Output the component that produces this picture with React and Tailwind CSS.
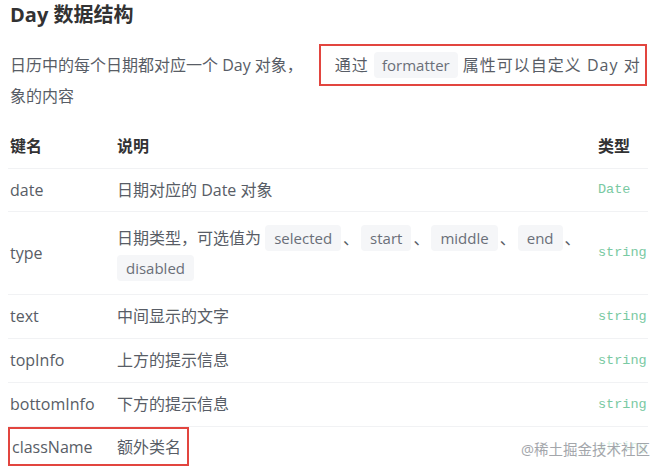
import React from 'react';

const sans = 'font-["Open_Sans","Noto_Sans_CJK_SC",sans-serif]';
const mono = 'font-["Liberation_Mono",monospace]';

const Code = ({ children, className = 'px-[8px]' }) => (
  <code className={`${sans} ${className} inline-block rounded-[4px] bg-[#f5f6f8] text-[15px] leading-[26px] tracking-normal text-[#6a6f78]`}>
    {children}
  </code>
);

const Sep = () => <span className="mx-[2px]">、</span>;

const rows = [
  { key: 'text', desc: '中间显示的文字', type: 'string' },
  { key: 'topInfo', desc: '上方的提示信息', type: 'string' },
  { key: 'bottomInfo', desc: '下方的提示信息', type: 'string' },
];

const App = () => {
  return (
    <div className={`${sans} relative h-[471px] w-[664px] overflow-hidden bg-white px-[10px] text-[#585d66]`}>
      <h3 className="text-[20px] font-bold leading-[30px] text-[#323233]">
        Day 数据结构
      </h3>

      <p className="mt-[20px] text-[16px] leading-[31px]">
        日历中的每个日期都对应一个 Day 对象，
        <span className="ml-[16px] border-2 border-[#e2453f] py-[8px] pl-[14px] pr-[4px] tracking-[1px]">
          通过 <Code>formatter</Code> <span className="tracking-[1px]">属性可以自定义 Day 对</span>
        </span>
        象的内容
      </p>

      <table className="mt-[12px] -ml-[2px] w-[640px] border-collapse text-[16px]">
        <thead>
          <tr className="border-b border-[#f1f2f4]">
            <th className="w-[107px] py-2.5 pl-[2px] text-left font-semibold leading-6 text-[#323233]">键名</th>
            <th className="py-2.5 pl-[2px] text-left font-semibold leading-6 text-[#323233]">说明</th>
            <th className="w-[50px] py-2.5 text-left font-semibold leading-6 text-[#323233]">类型</th>
          </tr>
        </thead>
        <tbody>
          <tr className="border-b border-[#f1f2f4]">
            <td className="py-2.5 pl-[2px] leading-[22px]">date</td>
            <td className="py-2.5 pl-[2px] leading-[22px]">日期对应的 Date 对象</td>
            <td className={`${mono} py-2.5 text-[13.5px] leading-[22px] text-[#79c9a2]`}>Date</td>
          </tr>
          <tr className="border-b border-[#f1f2f4]">
            <td className="py-2.5 pl-[2px] leading-6">type</td>
            <td className="py-[11px] pl-[2px] leading-[30px]">
              日期类型，可选值为 <Code className="px-[9px]">selected</Code><Sep /><Code className="px-[9px]">start</Code><Sep />
              <Code className="px-[9px]">middle</Code><Sep /><Code className="px-[9px]">end</Code><Sep />
              <br />
              <Code className="px-[9px]">disabled</Code>
            </td>
            <td className={`${mono} py-2.5 text-[13.5px] leading-6 text-[#79c9a2]`}>string</td>
          </tr>
          {rows.map((r) => (
            <tr key={r.key} className="border-b border-[#f1f2f4]">
              <td className="py-2.5 pl-[2px] leading-[23px]">{r.key}</td>
              <td className="py-2.5 pl-[2px] leading-[23px]">{r.desc}</td>
              <td className={`${mono} py-2.5 text-[13.5px] leading-[23px] text-[#79c9a2]`}>{r.type}</td>
            </tr>
          ))}
          <tr>
            <td colSpan={2} className="py-0 pl-0 align-top">
              <span className="flex h-[39px] w-[181px] items-center border-2 border-[#e2453f] pl-[2px]">
                <span className="w-[105px]">className</span>
                <span>额外类名</span>
              </span>
            </td>
            <td className={`${mono} py-0 align-middle text-[13.5px] leading-6 text-[#79c9a2] opacity-30`}>string</td>
          </tr>
        </tbody>
      </table>

      <div className="absolute right-[14px] top-[438px] text-[14.5px] leading-6 text-[#9a9da3] opacity-90">
        @稀土掘金技术社区
      </div>
    </div>
  );
};

export default App;
